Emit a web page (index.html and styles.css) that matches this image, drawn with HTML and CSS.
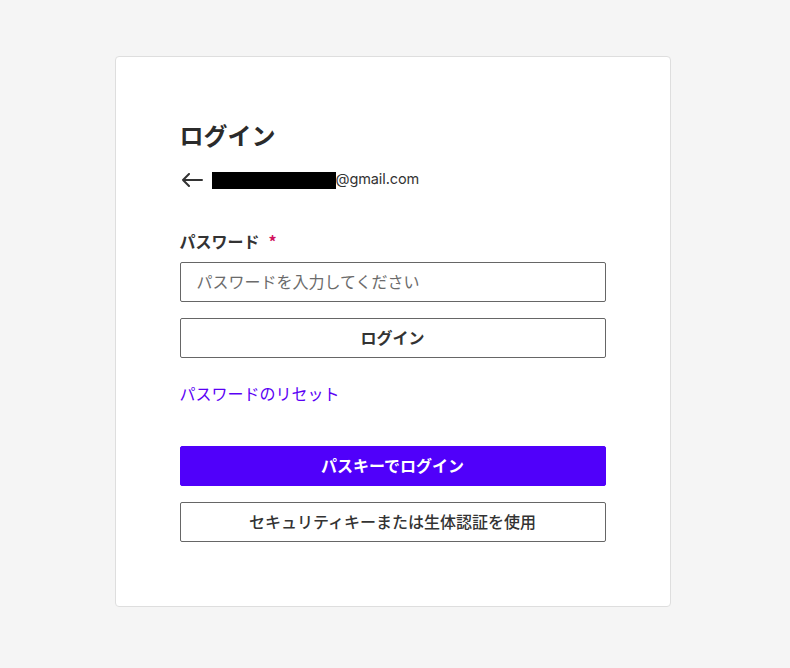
FILE: index.html
```html
<!DOCTYPE html>
<html lang="ja">
<head>
<meta charset="utf-8">
<title>ログイン</title>
<link rel="stylesheet" href="styles.css">
</head>
<body>
<div class="page">
  <main class="card">
    <h1 class="title">ログイン</h1>
    <div class="account">
      <svg class="back" width="22" height="14" viewBox="0 0 22 14" aria-hidden="true">
        <path d="M21 7H2M8 1L2 7l6 6" fill="none" stroke="#333" stroke-width="2" stroke-linecap="round" stroke-linejoin="round"/>
      </svg>
      <span class="redact"></span><span class="email">@gmail.com</span>
    </div>
    <form class="form">
      <label class="label">パスワード<span class="req">*</span></label>
      <input class="input" type="password" placeholder="パスワードを入力してください">
      <button type="button" class="btn btn-outline">ログイン</button>
      <a class="link" href="#">パスワードのリセット</a>
      <button type="button" class="btn btn-primary">パスキーでログイン</button>
      <button type="button" class="btn btn-outline btn-light">セキュリティキーまたは生体認証を使用</button>
    </form>
  </main>
</div>
</body>
</html>
```
FILE: styles.css
```css
html, body {
  margin: 0;
  padding: 0;
  background: #f5f5f5;
}
body {
  font-family: "Noto Sans CJK JP", "Noto Sans", sans-serif;
  color: #333;
}
.page {
  display: flex;
  justify-content: center;
  padding: 56px 5px 0 0;
}
.card {
  box-sizing: border-box;
  width: 556px;
  background: #fff;
  border: 1px solid #dedede;
  border-radius: 4px;
  padding: 62px 64px 64px 64px;
}
.title {
  margin: 0;
  font-size: 24px;
  line-height: 32px;
  font-weight: 700;
  color: #2b2b2b;
}
.account {
  display: flex;
  align-items: center;
  height: 20px;
  margin-top: 19px;
}
.back {
  margin-left: 1px;
  margin-right: 9px;
}
.redact {
  display: inline-block;
  width: 124px;
  height: 17px;
  background: #000;
}
.email {
  font-family: "Inter", "Noto Sans", sans-serif;
  font-size: 14.5px;
  line-height: 18px;
  padding-bottom: 2px;
  color: #333;
  letter-spacing: -0.1px;
}
.form {
  display: flex;
  flex-direction: column;
  margin-top: 41px;
}
.label {
  font-size: 16px;
  line-height: 20px;
  font-weight: 700;
  color: #333;
  margin-bottom: 11px;
}
.req {
  color: #d1135e;
  margin-left: 9px;
}
.input {
  box-sizing: border-box;
  height: 40px;
  width: 100%;
  border: 1px solid #666;
  border-radius: 2px;
  padding: 0 16px 2px;
  font-family: "Noto Sans CJK JP", sans-serif;
  font-size: 16px;
  color: #333;
  outline: none;
}
.input::placeholder {
  color: #6b6b6b;
}
.btn {
  box-sizing: border-box;
  height: 40px;
  width: 100%;
  border-radius: 2px;
  padding: 0 0 3px;
  font-family: "Noto Sans CJK JP", sans-serif;
  font-size: 16px;
  font-weight: 700;
  cursor: pointer;
}
.btn-outline {
  background: #fff;
  border: 1px solid #666;
  color: #333;
  margin-top: 16px;
}
.btn-light {
  font-weight: 500;
}
.btn-primary {
  background: #5000fa;
  border: 1px solid #5000fa;
  color: #fff;
  margin-top: 41px;
}
.link {
  display: block;
  margin-top: 23px;
  font-size: 16px;
  line-height: 24px;
  color: #5a00f5;
  text-decoration: none;
}
```
